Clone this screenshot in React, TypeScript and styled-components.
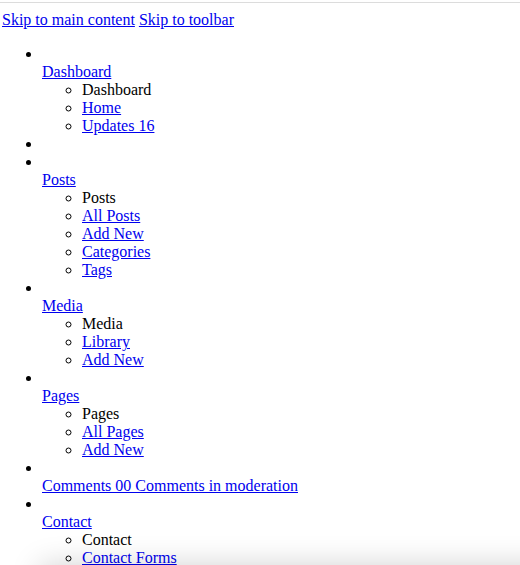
import * as React from "react";
import styled, { createGlobalStyle } from "styled-components";

const GlobalStyle = createGlobalStyle`
  body {
    margin: 0;
    background: #fff;
    color: #000;
    font-family: "Liberation Serif", "Times New Roman", serif;
    font-size: 16px;
    line-height: 18px;
  }
  a {
    color: #0000ee;
    text-decoration: underline;
  }
`;

const Page = styled.div`
  padding: 2px 2px 8px;
`;

const TopRule = styled.div`
  height: 1px;
  margin: 0 -2px 8px;
  background: #dcdcdc;
`;

const SkipLinks = styled.div``;

const AdminMenu = styled.ul`
  margin: 16px 0 0;
  padding-left: 40px;
  list-style: disc;
`;

const MenuItem = styled.li``;

const MenuTop = styled.a``;

const MenuImage = styled.div``;

const MenuName = styled.div``;

const SubMenu = styled.ul`
  margin: 0;
  padding-left: 40px;
  list-style: circle;
`;

const SubHead = styled.li``;

const Separator = styled.div``;

const BottomShade = styled.div`
  position: fixed;
  left: 40px;
  right: -40px;
  bottom: -40px;
  height: 40px;
  box-shadow: 0 0 30px rgba(0, 0, 0, 0.18);
  pointer-events: none;
`;

interface IMenu {
  name: string;
  head: string;
  items: string[];
}

const menus: (IMenu | "sep")[] = [
  { name: "Dashboard", head: "Dashboard", items: ["Home", "Updates 16"] },
  "sep",
  {
    name: "Posts",
    head: "Posts",
    items: ["All Posts", "Add New", "Categories", "Tags"],
  },
  { name: "Media", head: "Media", items: ["Library", "Add New"] },
  { name: "Pages", head: "Pages", items: ["All Pages", "Add New"] },
  { name: "Comments 00 Comments in moderation", head: "", items: [] },
  { name: "Contact", head: "Contact", items: ["Contact Forms"] },
];

export default function App() {
  return (
    <Page>
      <GlobalStyle />
      <TopRule />
      <SkipLinks>
        <a href="#main">Skip to main content</a>{" "}
        <a href="#toolbar">Skip to toolbar</a>
      </SkipLinks>
      <AdminMenu>
        {menus.map((menu, i) => {
          if (menu === "sep") {
            return (
              <MenuItem key={i}>
                <Separator />
              </MenuItem>
            );
          }
          return (
            <MenuItem key={i}>
              <MenuImage>
                <br />
              </MenuImage>
              <MenuTop href="#">
                <MenuName>{menu.name}</MenuName>
              </MenuTop>
              {menu.items.length > 0 && (
                <SubMenu>
                  <SubHead>{menu.head}</SubHead>
                  {menu.items.map(item => (
                    <li key={item}>
                      <a href="#">{item}</a>
                    </li>
                  ))}
                </SubMenu>
              )}
            </MenuItem>
          );
        })}
      </AdminMenu>
      <BottomShade />
    </Page>
  );
}
